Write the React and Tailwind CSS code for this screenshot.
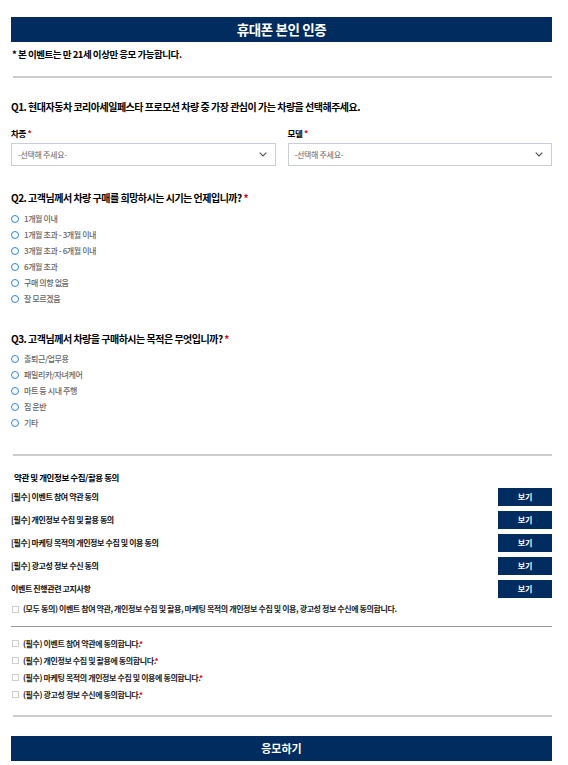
import React from "react";

const font = { fontFamily: '"Noto Sans CJK KR", "Noto Sans", sans-serif' };

const periods = ["1개월 이내", "1개월 초과 - 3개월 이내", "3개월 초과 - 6개월 이내", "6개월 초과", "구매 의향 없음", "잘 모르겠음"];
const purposes = ["출퇴근/업무용", "패밀리카/자녀케어", "마트 등 시내 주행", "짐 운반", "기타"];
const terms = [
  "[필수] 이벤트 참여 약관 동의",
  "[필수] 개인정보 수집 및 활용 동의",
  "[필수] 마케팅 목적의 개인정보 수집 및 이용 동의",
  "[필수] 광고성 정보 수신 동의",
  "이벤트 진행관련 고지사항",
];
const agrees = [
  "(필수) 이벤트 참여 약관에 동의합니다.",
  "(필수) 개인정보 수집 및 활용에 동의합니다.",
  "(필수) 마케팅 목적의 개인정보 수집 및 이용에 동의합니다.",
  "(필수) 광고성 정보 수신에 동의합니다.",
];

function Select({ label }) {
  return (
    <div className="flex-1 flex flex-col">
      <div className="h-[14px] leading-[14px] text-[8.5px] font-bold text-black tracking-[-0.04em]">
        {label} <span className="text-[#e60012]">*</span>
      </div>
      <div className="mt-[3px] h-[23px] border border-[#c9ced8] bg-white flex items-center justify-between pl-[6px] pr-[8px]">
        <span className="text-[8px] text-[#666] tracking-[-0.04em]">-선택해 주세요-</span>
        <svg width="8" height="5" viewBox="0 0 8 5" fill="none">
          <path d="M0.7 0.7 L4 4 L7.3 0.7" stroke="#555" strokeWidth="1.2" />
        </svg>
      </div>
    </div>
  );
}

function Radio({ text }) {
  return (
    <div className="h-[16px] flex items-center">
      <span className="w-[8px] h-[8px] rounded-full border-[1.5px] border-[#2b86e6]" />
      <span className="ml-[5px] text-[8px] font-medium text-[#666] tracking-[-0.05em]">{text}</span>
    </div>
  );
}

function Check({ text, req }) {
  return (
    <div className="h-[17px] flex items-center">
      <span className="w-[7px] h-[7px] border border-[#cfcfcf] ml-[1px] bg-white" />
      <span className="ml-[4px] text-[8px] font-bold text-[#222] tracking-[-0.05em]">
        {text}
        {req && <span className="text-[#e60012]">*</span>}
      </span>
    </div>
  );
}

export default function App() {
  return (
    <div className="w-[568px] min-h-[765px] bg-white pl-[11px] pr-[16px] pt-[17px]" style={font}>
      <div className="h-[25px] bg-[#002c5f] flex items-center justify-center text-white text-[13.5px] font-bold tracking-[-0.03em]">
        휴대폰 본인 인증
      </div>
      <div className="mt-[5px] h-[14px] leading-[14px] text-[9.5px] font-bold text-black tracking-[-0.05em] pl-[1px]">
        * 본 이벤트는 만 21세 이상만 응모 가능합니다.
      </div>
      <div className="mt-[15px] ml-[2px] h-[2px] bg-[#cccccc]" />

      <div className="mt-[21px] h-[16px] leading-[16px] text-[10px] font-bold text-black tracking-[-0.05em]">
        Q1. 현대자동차 코리아세일페스타 프로모션 차량 중 가장 관심이 가는 차량을 선택해주세요.
      </div>
      <div className="mt-[11px] flex gap-[12px]">
        <Select label="차종" />
        <Select label="모델" />
      </div>

      <div className="mt-[24px] h-[16px] leading-[16px] text-[10px] font-bold text-black tracking-[-0.05em]">
        Q2. 고객님께서 차량 구매를 희망하시는 시기는 언제입니까? <span className="text-[#e60012]">*</span>
      </div>
      <div className="mt-[5px] flex flex-col">
        {periods.map((p) => (
          <Radio key={p} text={p} />
        ))}
      </div>

      <div className="mt-[24px] h-[16px] leading-[16px] text-[10px] font-bold text-black tracking-[-0.05em]">
        Q3. 고객님께서 차량을 구매하시는 목적은 무엇입니까? <span className="text-[#e60012]">*</span>
      </div>
      <div className="mt-[4px] flex flex-col">
        {purposes.map((p) => (
          <Radio key={p} text={p} />
        ))}
      </div>

      <div className="mt-[23px] ml-[2px] h-[2px] bg-[#cccccc]" />

      <div className="mt-[14px] h-[14px] leading-[14px] pl-[3px] text-[8.5px] font-bold text-black tracking-[-0.05em]">
        약관 및 개인정보 수집/활용 동의
      </div>
      <div className="mt-[4px] flex flex-col gap-[5px]">
        {terms.map((t) => (
          <div key={t} className="h-[18px] flex items-center justify-between">
            <span className="text-[8px] font-bold text-[#111] tracking-[-0.05em]">{t}</span>
            <button className="w-[54px] h-[18px] bg-[#002c5f] text-white text-[8px] font-bold">보기</button>
          </div>
        ))}
      </div>
      <div className="mt-[4px] h-[14px] flex items-center">
        <span className="w-[7px] h-[7px] border border-[#cfcfcf] ml-[1px]" />
        <span className="ml-[4px] text-[8px] font-bold text-[#222] tracking-[-0.05em]">
          (모두 동의) 이벤트 참여 약관, 개인정보 수집 및 활용, 마케팅 목적의 개인정보 수집 및 이용, 광고성 정보 수신에 동의합니다.
        </span>
      </div>
      <div className="mt-[10px] h-px bg-[#999999]" />

      <div className="mt-[8px] flex flex-col">
        {agrees.map((a) => (
          <Check key={a} text={a} req />
        ))}
      </div>

      <div className="mt-[12px] ml-[2px] h-[2px] bg-[#cccccc]" />

      <button className="mt-[19px] w-full h-[25px] bg-[#002c5f] text-white text-[11px] font-bold flex items-center justify-center">
        응모하기
      </button>
    </div>
  );
}
